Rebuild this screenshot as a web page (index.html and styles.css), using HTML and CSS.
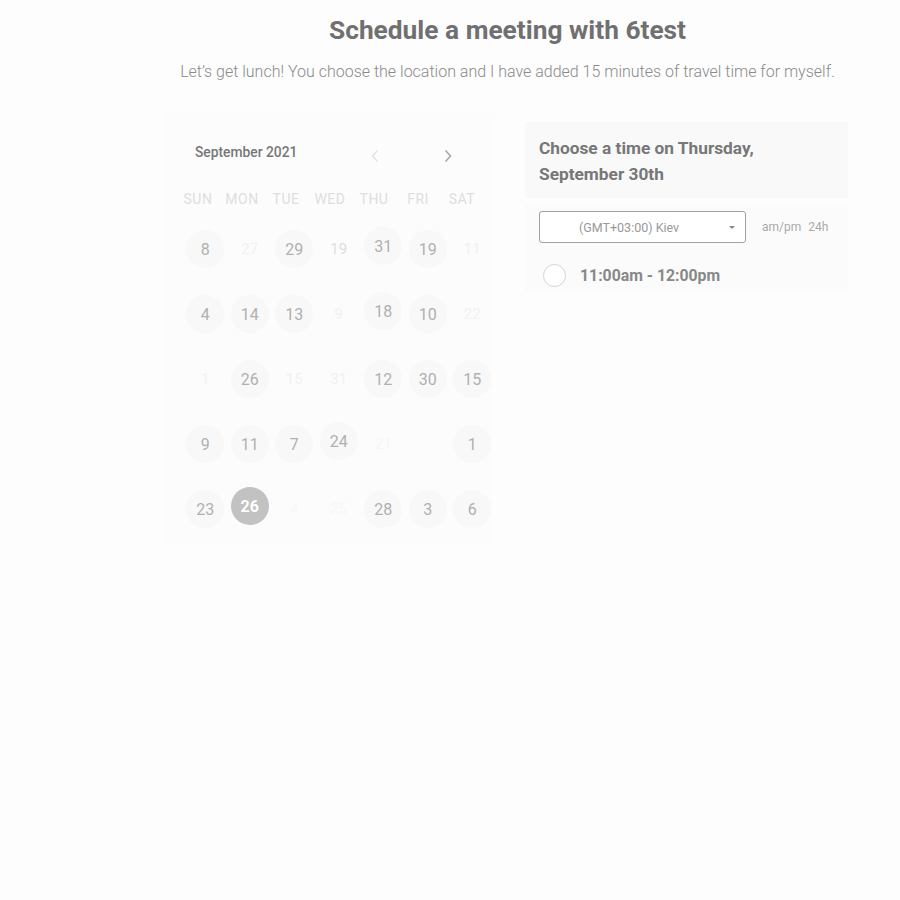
FILE: index.html
```html
<!DOCTYPE html>
<html>
<head>
<meta charset="utf-8">
<link rel="stylesheet" href="styles.css">
</head>
<body>
<div class="page">
  <header class="head">
    <h1 class="title">Schedule a meeting with 6test</h1>
    <p class="subtitle">Let’s get lunch! You choose the location and I have added 15 minutes of travel time for myself.</p>
  </header>
  <main class="main">
    <section class="calendar">
      <div class="cal-top">
        <span class="month">September 2021</span>
        <span class="nav nav-prev"><svg width="10" height="14" viewBox="0 0 10 14"><path d="M7.5 1.5 L2.5 7 L7.5 12.5" fill="none" stroke="currentColor" stroke-width="1.4"/></svg></span>
        <span class="nav nav-next"><svg width="10" height="14" viewBox="0 0 10 14"><path d="M2.5 1.5 L7.5 7 L2.5 12.5" fill="none" stroke="currentColor" stroke-width="1.6"/></svg></span>
      </div>
      <div class="weekdays">
        <span>SUN</span><span>MON</span><span>TUE</span><span>WED</span><span>THU</span><span>FRI</span><span>SAT</span>
      </div>
      <div class="days">
        <span class="day on">8</span><span class="day off">27</span><span class="day on">29</span><span class="day dim">19</span><span class="day on up">31</span><span class="day on">19</span><span class="day off">11</span>
        <span class="day on">4</span><span class="day on">14</span><span class="day on">13</span><span class="day off">9</span><span class="day on up">18</span><span class="day on">10</span><span class="day off">22</span>
        <span class="day off">1</span><span class="day on">26</span><span class="day off">15</span><span class="day off">31</span><span class="day on">12</span><span class="day on">30</span><span class="day on">15</span>
        <span class="day on">9</span><span class="day on">11</span><span class="day on">7</span><span class="day on up">24</span><span class="day ghost">21</span><span class="day ghost">.</span><span class="day on">1</span>
        <span class="day on">23</span><span class="day sel">26</span><span class="day ghost">4</span><span class="day ghost">25</span><span class="day on">28</span><span class="day on">3</span><span class="day on">6</span>
      </div>
    </section>
    <section class="times">
      <div class="times-head">Choose a time on Thursday, September 30th</div>
      <div class="times-body">
        <div class="tz-row">
          <div class="tz-select"><span class="tz-text">(GMT+03:00) Kiev</span><span class="caret"></span></div>
          <div class="fmt"><span>am/pm</span><span>24h</span></div>
        </div>
        <div class="slot">
          <span class="radio"></span>
          <span class="slot-text">11:00am - 12:00pm</span>
        </div>
      </div>
    </section>
  </main>
</div>
</body>
</html>
```
FILE: styles.css
```css
* { box-sizing: border-box; }
html, body { margin: 0; padding: 0; }
body {
  background: #fdfdfd;
  font-family: Roboto, "Liberation Sans", sans-serif;
  width: 900px;
  height: 900px;
}
.page { padding-left: 115px; }
.head { text-align: center; padding-top: 14px; }
.title {
  margin: 0;
  font-size: 26.3px;
  line-height: 32px;
  font-weight: 700;
  color: #707070;
}
.subtitle {
  margin: 16px 0 0;
  font-size: 16px;
  line-height: 20px;
  font-weight: 300;
  color: #8a8a8a;
}
.main {
  display: flex;
  align-items: flex-start;
  gap: 32px;
  margin-top: 31px;
  padding-left: 48px;
}
.calendar {
  width: 330px;
  height: 430px;
  background: #fcfcfc;
  border-radius: 6px;
  padding-top: 29px;
}
.cal-top {
  display: flex;
  align-items: center;
  height: 20px;
  padding-left: 32px;
}
.month { font-size: 13.8px; font-weight: 500; color: #777; width: 175px; }
.nav { display: flex; margin-top: 8px; }
.nav-prev { color: #e2e2e2; }
.nav-next { color: #a8a8a8; margin-left: 63px; }
.weekdays {
  display: grid;
  grid-template-columns: repeat(7, 44px);
  margin-top: 27px;
  padding-left: 13px;
  height: 20px;
}
.weekdays span {
  text-align: center;
  font-size: 14px;
  line-height: 20px;
  color: #dedede;
  letter-spacing: 0.5px;
}
.days {
  display: grid;
  grid-template-columns: repeat(7, 44.5px);
  grid-auto-rows: 65px;
  margin-top: 21px;
  padding-left: 20px;
}
.day {
  display: flex;
  align-items: center;
  justify-content: center;
  font-size: 16px;
  color: #b0b0b0;
  width: 38px;
  height: 38px;
  margin: 0 auto;
  border-radius: 50%;
}
.day.on { background: #f8f8f8; }
.day.up { margin-top: -3px; }
.day.off { color: #f1f1f1; font-size: 15px; }
.day.dim { color: #dedede; font-size: 15px; }
.day.ghost { color: #f7f7f7; font-size: 15px; }
.day.sel { background: #c2c2c2; color: #fff; font-weight: 700; margin-top: -3px; }
.times { width: 323px; padding-top: 9px; }
.times-head {
  background: #f9f9f9;
  padding: 13px 14px 11px;
  font-size: 17.3px;
  line-height: 26px;
  font-weight: 700;
  color: #777;
  padding-right: 60px;
  height: 76px;
}
.times-body {
  margin-top: 6px;
  background: #fbfbfb;
  padding: 7px 14px 0;
  height: 88px;
}
.tz-row { display: flex; align-items: center; }
.tz-select {
  width: 207px;
  height: 32px;
  border: 1px solid #a0a0a0;
  border-radius: 3px;
  background: #fff;
  display: flex;
  align-items: center;
  position: relative;
  padding-left: 39px;
}
.tz-text { font-size: 12.5px; color: #999; }
.caret {
  margin-left: auto;
  margin-right: 10px;
  width: 0; height: 0;
  border-left: 3px solid transparent;
  border-right: 3px solid transparent;
  border-top: 3px solid #888;
}
.fmt { display: flex; gap: 7px; margin-left: 16px; font-size: 12px; color: #aaa; }
.slot { display: flex; align-items: center; margin-top: 21px; padding-left: 4px; }
.radio {
  width: 23px; height: 23px;
  border: 1px solid #d4d4d4;
  border-radius: 50%;
  background: #fff;
}
.slot-text { margin-left: 14px; font-size: 15.8px; font-weight: 700; color: #888; }
```
